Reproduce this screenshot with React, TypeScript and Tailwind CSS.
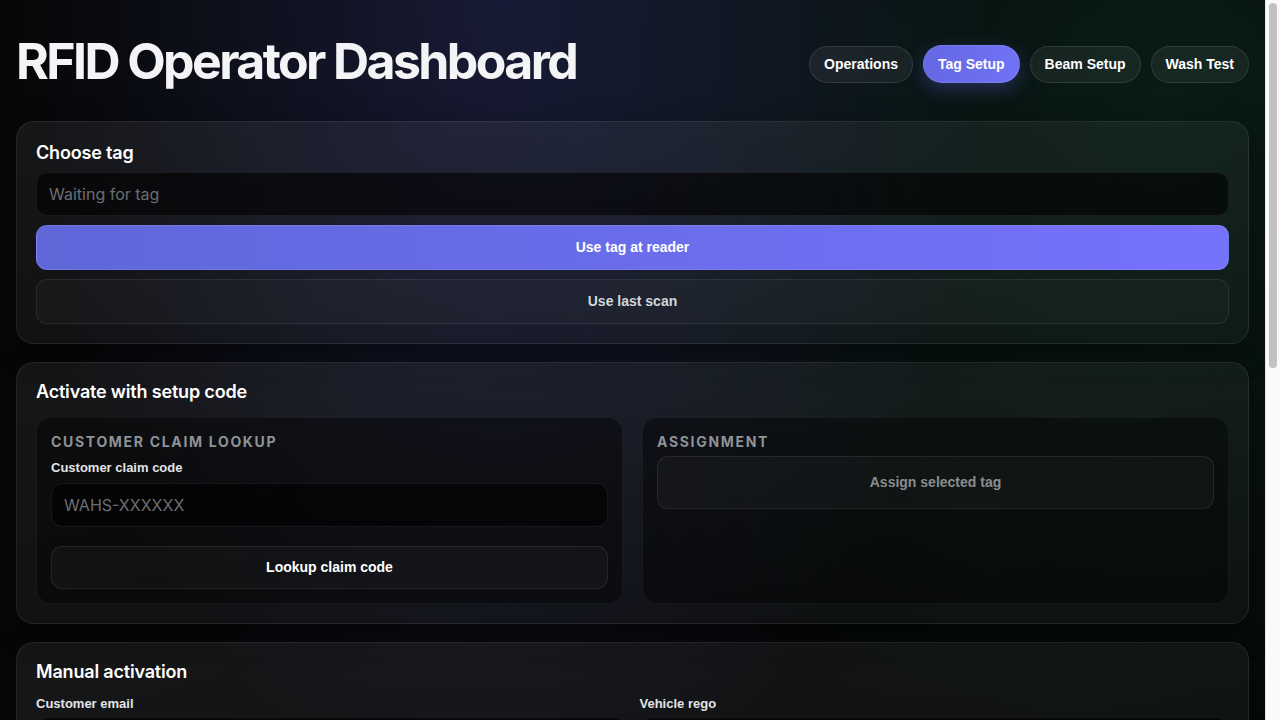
import React, { useState } from 'react';

const tabs = ['Operations', 'Tag Setup', 'Beam Setup', 'Wash Test'];

const inter = "font-['Inter','Noto_Sans',sans-serif]";
const arial = "font-['Liberation_Sans','Arial',sans-serif]";

function Card({ title, titleClass = '', children }: { title: string; titleClass?: string; children: React.ReactNode }) {
  return (
    <section className="rounded-[18px] border border-white/[0.08] bg-gradient-to-br from-white/[0.065] to-white/[0.03] p-[19px] shadow-[0_10px_30px_rgba(0,0,0,0.35)]">
      <h2 className={`${inter} text-[18px] leading-[24px] font-semibold text-white tracking-[-0.01em] ${titleClass}`}>{title}</h2>
      {children}
    </section>
  );
}

function TextInput({ placeholder }: { placeholder: string }) {
  return (
    <input
      placeholder={placeholder}
      className={`${inter} w-full h-[44px] rounded-[11px] border border-white/[0.07] bg-black/60 px-3 text-[16px] text-white placeholder:text-[#6b6e73] outline-none focus:border-indigo-400/50`}
    />
  );
}

function Label({ children }: { children: React.ReactNode }) {
  return <label className={`${arial} block text-[13px] leading-[16px] font-bold text-[#e2e4e8]`}>{children}</label>;
}

export default function App() {
  const [tab, setTab] = useState('Tag Setup');

  return (
    <div className="flex bg-[#060708]">
      <div className="min-h-screen min-w-0 flex-1 bg-[radial-gradient(ellipse_at_40%_0%,rgba(70,78,170,0.28),transparent_45%),radial-gradient(ellipse_at_92%_8%,rgba(20,110,80,0.2),transparent_40%)] px-4 pb-10 text-white">
        {/* Header */}
        <header className="flex items-start justify-between pt-[35px]">
          <h1 className={`${inter} text-[50px] leading-[52px] font-bold tracking-[-0.052em] text-[#f4f4f6]`}>
            RFID Operator Dashboard
          </h1>
          <nav className="flex gap-[10px] pt-[11px]">
            {tabs.map((t) => (
              <button
                key={t}
                onClick={() => setTab(t)}
                className={
                  t === tab
                    ? `${arial} h-[38px] -translate-y-px rounded-full border border-white/10 bg-gradient-to-r from-[#6468e2] to-[#7172f6] px-[14px] text-[14px] font-bold text-white shadow-[0_6px_18px_rgba(99,102,241,0.3)]`
                    : `${arial} h-[37px] rounded-full border border-white/10 bg-white/[0.06] px-[14px] text-[14px] font-bold text-white`
                }
              >
                {t}
              </button>
            ))}
          </nav>
        </header>

        <main className="mt-[34px] flex flex-col gap-[18px]">
          {/* Choose tag */}
          <Card title="Choose tag">
            <div className="mt-[7px] flex flex-col gap-[9px]">
              <TextInput placeholder="Waiting for tag" />
              <button className={`${arial} h-[45px] rounded-[11px] border border-white/10 bg-gradient-to-r from-[#5f67d9] to-[#7572fc] text-[14px] font-bold text-white`}>
                Use tag at reader
              </button>
              <button className={`${arial} h-[45px] rounded-[11px] border border-white/[0.08] bg-white/[0.025] text-[14px] font-bold text-[#d4d6da]`}>
                Use last scan
              </button>
            </div>
          </Card>

          {/* Setup code */}
          <Card title="Activate with setup code" titleClass="-mt-0.5">
            <div className="mt-[13px] grid grid-cols-2 gap-[19px]">
              <div className="rounded-[15px] border border-white/[0.05] bg-black/40 p-[14px]">
                <h3 className={`${inter} text-[14px] leading-[20px] font-bold uppercase tracking-[0.12em] text-[#8e9299]`}>
                  Customer claim lookup
                </h3>
                <div className="mt-2">
                  <Label>Customer claim code</Label>
                </div>
                <div className="mt-[7px]">
                  <TextInput placeholder="WAHS-XXXXXX" />
                </div>
                <button className={`${arial} mt-[19px] h-[43px] w-full rounded-[11px] border border-white/[0.08] bg-white/[0.03] text-[14px] font-bold text-white`}>
                  Lookup claim code
                </button>
              </div>
              <div className="rounded-[15px] border border-white/[0.05] bg-black/40 p-[14px]">
                <h3 className={`${inter} text-[14px] leading-[20px] font-bold uppercase tracking-[0.12em] text-[#8e9299]`}>
                  Assignment
                </h3>
                <button
                  disabled
                  className={`${arial} mt-1 h-[53px] w-full rounded-[11px] border border-white/[0.08] bg-white/[0.03] text-[14px] font-bold text-[#8a8c90]`}
                >
                  Assign selected tag
                </button>
              </div>
            </div>
          </Card>

          {/* Manual activation */}
          <Card title="Manual activation" titleClass="-mt-0.5">
            <div className="mt-[12px] grid grid-cols-2 gap-x-[14px] gap-y-[14px]">
              <div className="flex flex-col gap-[5px]">
                <Label>Customer email</Label>
                <TextInput placeholder="customer@example.com" />
              </div>
              <div className="flex flex-col gap-[5px]">
                <Label>Vehicle rego</Label>
                <TextInput placeholder="ABC123" />
              </div>
              <div className="flex flex-col gap-[5px]">
                <Label>Customer name</Label>
                <TextInput placeholder="Full name" />
              </div>
              <div className="flex flex-col gap-[5px]">
                <Label>Phone</Label>
                <TextInput placeholder="04XX XXX XXX" />
              </div>
              <div className="flex flex-col gap-[5px]">
                <Label>Vehicle make</Label>
                <TextInput placeholder="Make / model" />
              </div>
              <div className="flex flex-col gap-[5px]">
                <Label>Plan</Label>
                <TextInput placeholder="Select plan" />
              </div>
            </div>
            <button className={`${arial} mt-[14px] h-[45px] w-full rounded-[11px] border border-white/10 bg-gradient-to-r from-[#5f67d9] to-[#7572fc] text-[14px] font-bold text-white`}>
              Activate tag
            </button>
          </Card>

          {/* Recent */}
          <Card title="Recent activity">
            <div className="mt-2 flex flex-col gap-[9px]">
              {['No tag events yet', 'Reader idle', 'Waiting for scan'].map((r) => (
                <div key={r} className={`${inter} flex h-[44px] items-center rounded-[11px] border border-white/[0.06] bg-black/30 px-3 text-[14px] text-[#8e9299]`}>
                  {r}
                </div>
              ))}
            </div>
          </Card>
        </main>
      </div>

      {/* Page scrollbar */}
      <aside className="sticky top-0 h-screen w-[15px] shrink-0 border-l border-[#e8e8e8] bg-[#fafafa] px-[3px] pt-[3px]">
        <div className="h-[365px] rounded-full bg-[#c1c1c1]" />
      </aside>
    </div>
  );
}
